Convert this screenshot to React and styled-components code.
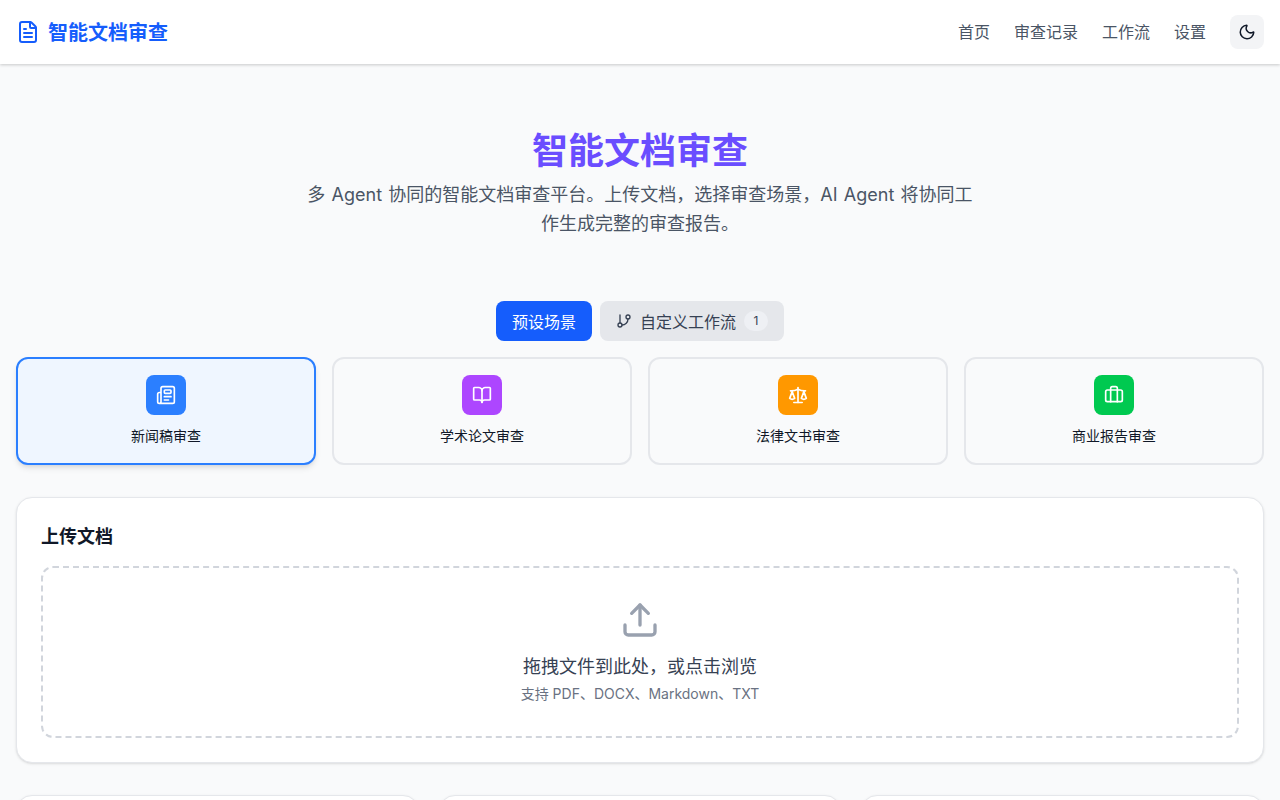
import React, { useState } from "react";
import styled, { createGlobalStyle } from "styled-components";
import { FileText, Moon, GitBranch, Newspaper, BookOpen, Scale, Briefcase, Upload } from "lucide-react";

const GlobalStyle = createGlobalStyle`
  * { box-sizing: border-box; }
  body {
    margin: 0;
    background: #f9fafb;
    color: #111827;
    font-family: Inter, "Noto Sans CJK SC", sans-serif;
  }
`;

const Header = styled.header`
  height: 64px;
  padding: 0 16px;
  background: #fff;
  box-shadow: 0 1px 3px rgba(0, 0, 0, 0.2);
  display: flex;
  align-items: center;
  justify-content: space-between;
`;

const Brand = styled.div`
  display: flex;
  align-items: center;
  gap: 8px;
  color: #155dfc;
  font-size: 20px;
  font-weight: 700;
`;

const BrandName = styled.span`
  padding-bottom: 2px;
`;

const Nav = styled.nav`
  display: flex;
  align-items: center;
  gap: 24px;
`;

const NavLink = styled.a`
  padding-bottom: 2px;
  font-size: 16px;
  color: #4a5565;
  cursor: pointer;
`;

const ThemeButton = styled.button`
  width: 34px;
  height: 34px;
  border: none;
  border-radius: 8px;
  background: #f3f4f6;
  color: #101828;
  display: flex;
  align-items: center;
  justify-content: center;
  padding: 0;
  cursor: pointer;
`;

const Main = styled.main`
  padding: 0 16px 32px;
`;

const Hero = styled.section`
  padding-top: 63px;
  height: 237px;
  text-align: center;
`;

const Title = styled.h1`
  margin: 0 0 5px;
  font-size: 36px;
  line-height: 48px;
  font-weight: 700;
  color: #6a4dff;
`;

const Subtitle = styled.p`
  margin: 0 auto;
  max-width: 672px;
  font-size: 18px;
  line-height: 29px;
  word-spacing: 1.2px;
  color: #4a5565;
`;

const Tabs = styled.div`
  display: flex;
  justify-content: center;
  gap: 8px;
  margin-bottom: 16px;
`;

const Tab = styled.button`
  height: 40px;
  padding: 0 16px;
  border: none;
  border-radius: 8px;
  font: inherit;
  font-size: 16px;
  display: flex;
  align-items: center;
  gap: 8px;
  cursor: pointer;
  background: ${(p) => (p.$active ? "#155dfc" : "#e5e7eb")};
  color: ${(p) => (p.$active ? "#fff" : "#364153")};
`;

const TabLabel = styled.span`
  padding-bottom: 1px;
`;

const TabCount = styled.span`
  min-width: 24px;
  height: 20px;
  border-radius: 10px;
  background: #eef0f4;
  font-size: 12px;
  line-height: 20px;
  text-align: center;
`;

const Scenes = styled.div`
  display: grid;
  grid-template-columns: repeat(4, 1fr);
  gap: 16px;
  margin-bottom: 32px;
`;

const Scene = styled.button`
  height: 108px;
  padding: 16px;
  border-radius: 12px;
  border: 2px solid ${(p) => (p.$active ? "#2b7fff" : "#e5e7eb")};
  background: ${(p) => (p.$active ? "#eff6ff" : "#f9fafb")};
  box-shadow: ${(p) => (p.$active ? "0 4px 6px -1px rgba(0,0,0,.1), 0 2px 4px -2px rgba(0,0,0,.1)" : "none")};
  display: flex;
  flex-direction: column;
  align-items: center;
  gap: 11px;
  font: inherit;
  font-size: 14px;
  line-height: 20px;
  color: #101828;
  cursor: pointer;
`;

const SceneIcon = styled.span`
  width: 40px;
  height: 40px;
  border-radius: 8px;
  background: ${(p) => p.$color};
  color: #fff;
  display: flex;
  align-items: center;
  justify-content: center;
`;

const Card = styled.section`
  background: #fff;
  border: 1px solid #e5e7eb;
  border-radius: 16px;
  box-shadow: 0 1px 3px rgba(0, 0, 0, 0.1), 0 1px 2px -1px rgba(0, 0, 0, 0.1);
`;

const UploadCard = styled(Card)`
  padding: 25px 24px 24px;
  margin-bottom: 32px;
`;

const CardTitle = styled.h2`
  margin: 0 0 15px;
  font-size: 18px;
  line-height: 28px;
  font-weight: 700;
  color: #101828;
`;

const DropZone = styled.div`
  height: 172px;
  border: 2px dashed #d1d5dc;
  border-radius: 12px;
  display: flex;
  flex-direction: column;
  align-items: center;
  justify-content: center;
  cursor: pointer;
`;

const DropIcon = styled(Upload)`
  color: #99a1af;
  margin-bottom: 13px;
`;

const DropText = styled.p`
  margin: 0;
  font-size: 18px;
  line-height: 28px;
  color: #364153;
`;

const DropHint = styled.p`
  margin: 3px 0 0;
  font-size: 14px;
  line-height: 20px;
  color: #6a7282;
`;

const BottomRow = styled.div`
  display: grid;
  grid-template-columns: repeat(3, 1fr);
  gap: 20px;
`;

const BottomCard = styled(Card)`
  height: 160px;
`;

const scenes = [
  { name: "新闻稿审查", color: "#2b7fff", icon: Newspaper },
  { name: "学术论文审查", color: "#ad46ff", icon: BookOpen },
  { name: "法律文书审查", color: "#ff9800", icon: Scale },
  { name: "商业报告审查", color: "#00c950", icon: Briefcase },
];

export default function App() {
  const [active, setActive] = useState(0);
  const [tab, setTab] = useState("preset");

  return (
    <>
      <GlobalStyle />
      <Header>
        <Brand>
          <FileText size={24} />
          <BrandName>智能文档审查</BrandName>
        </Brand>
        <Nav>
          <NavLink>首页</NavLink>
          <NavLink>审查记录</NavLink>
          <NavLink>工作流</NavLink>
          <NavLink>设置</NavLink>
          <ThemeButton aria-label="切换主题">
            <Moon size={18} />
          </ThemeButton>
        </Nav>
      </Header>
      <Main>
        <Hero>
          <Title>智能文档审查</Title>
          <Subtitle>
            多 Agent 协同的智能文档审查平台。上传文档，选择审查场景，AI Agent 将协同工作生成完整的审查报告。
          </Subtitle>
        </Hero>
        <Tabs>
          <Tab $active={tab === "preset"} onClick={() => setTab("preset")}>
            <TabLabel>预设场景</TabLabel>
          </Tab>
          <Tab $active={tab === "custom"} onClick={() => setTab("custom")}>
            <GitBranch size={16} />
            <TabLabel>自定义工作流</TabLabel>
            <TabCount>1</TabCount>
          </Tab>
        </Tabs>
        <Scenes>
          {scenes.map((s, i) => (
            <Scene key={s.name} $active={active === i} onClick={() => setActive(i)}>
              <SceneIcon $color={s.color}>
                <s.icon size={20} />
              </SceneIcon>
              {s.name}
            </Scene>
          ))}
        </Scenes>
        <UploadCard>
          <CardTitle>上传文档</CardTitle>
          <DropZone>
            <DropIcon size={40} />
            <DropText>拖拽文件到此处，或点击浏览</DropText>
            <DropHint>支持 PDF、DOCX、Markdown、TXT</DropHint>
          </DropZone>
        </UploadCard>
        <BottomRow>
          <BottomCard />
          <BottomCard />
          <BottomCard />
        </BottomRow>
      </Main>
    </>
  );
}
